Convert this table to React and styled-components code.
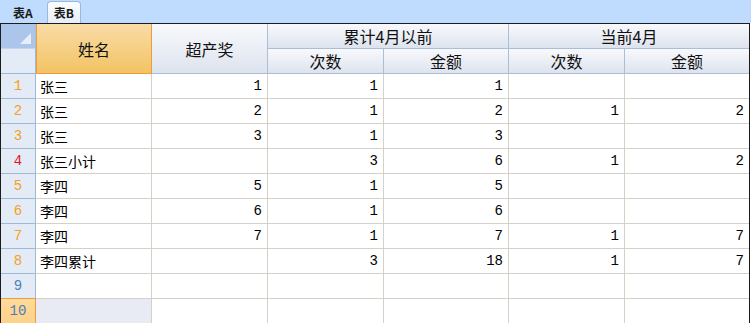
import React from "react";
import styled, { createGlobalStyle, css } from "styled-components";

const Global = createGlobalStyle`
  html, body {
    margin: 0;
    padding: 0;
    background: #ffffff;
    overflow: hidden;
  }
  body {
    font-family: "Noto Sans CJK SC", "Liberation Sans", sans-serif;
  }
`;

const Page = styled.div`
  width: 751px;
  height: 323px;
  display: flex;
  flex-direction: column;
  overflow: hidden;
`;

const TabStrip = styled.div`
  height: 23px;
  background: #bfdbfd;
  display: flex;
  align-items: flex-end;
  padding-left: 6px;
  gap: 7px;
  box-sizing: border-box;
`;

const Tab = styled.div`
  height: 22px;
  padding: 0 6px;
  display: flex;
  align-items: center;
  box-sizing: border-box;
  font-size: 12px;
  font-weight: bold;
  color: #1b1b1b;
  border: 1px solid transparent;
  border-bottom: none;
  border-radius: 4px 4px 0 0;
  ${(p) =>
    p.active &&
    css`
      background: linear-gradient(#fbfdff, #e6eef9);
      border-color: #9ab8df;
      padding: 0 6px;
    `}
`;

const Sheet = styled.div`
  display: grid;
  grid-template-columns: 35px 116px 116px 116px 125px 116px 124px;
  grid-auto-rows: 25px;
  border-top: 1px solid #1c1c1c;
  border-left: 1px solid #1c1c1c;
  border-right: 1px solid #1c1c1c;
  width: 750px;
  box-sizing: border-box;
  flex: 1;
  overflow: hidden;
`;

const Cell = styled.div`
  box-sizing: border-box;
  border-right: ${(p) => (p.last ? "none" : "1px solid #d5d1c9")};
  border-bottom: 1px solid #d5d1c9;
  font-size: 14px;
  color: #000;
  display: flex;
  align-items: center;
  justify-content: ${(p) => (p.num ? "flex-end" : "flex-start")};
  padding: ${(p) => (p.num ? "0 5px 1px 0" : "0 0 1px 4px")};
  font-family: ${(p) =>
    p.num
      ? `"Liberation Mono", "DejaVu Sans Mono", monospace`
      : `"Noto Sans CJK SC", sans-serif`};
  background: ${(p) => (p.picked ? "#e9ebf4" : "#ffffff")};
  white-space: nowrap;
`;

const Head = styled.div`
  box-sizing: border-box;
  grid-column: ${(p) => p.col || "auto"};
  grid-row: ${(p) => p.row || "auto"};
  background: linear-gradient(#f8f9fc, #dde3ee);
  border-right: ${(p) => (p.last ? "none" : "1px solid #a9bfd8")};
  border-bottom: 1px solid #a9bfd8;
  display: flex;
  align-items: center;
  justify-content: center;
  font-size: 16px;
  color: #111;
  white-space: nowrap;
`;

const NameHead = styled(Head)`
  background: linear-gradient(#f9dca6, #f2c364);
  border: 1px solid #f19a3a;
  border-top: none;
`;

const Corner = styled.div`
  position: relative;
  box-sizing: border-box;
  background: #abc6ea;
  border-right: 1px solid #a9bfd8;
  border-bottom: 1px solid #c6d6ea;
`;

const CornerMark = styled.div`
  position: absolute;
  right: 4px;
  bottom: 4px;
  width: 0;
  height: 0;
  border-left: 11px solid transparent;
  border-bottom: 11px solid #e7eef8;
`;

const RowHead = styled.div`
  box-sizing: border-box;
  background: ${(p) => (p.picked ? "linear-gradient(#ffdb9a, #fdd189)" : "#e3ebf6")};
  border-right: 1px solid ${(p) => (p.picked ? "#f19a3a" : "#9fb8d4")};
  border-bottom: 1px solid #9fb8d4;
  border-top: ${(p) => (p.picked ? "1px solid #f19a3a" : "none")};
  margin-top: ${(p) => (p.picked ? "-1px" : "0")};
  display: flex;
  align-items: center;
  justify-content: center;
  font-family: "Liberation Mono", "DejaVu Sans Mono", monospace;
  font-size: 14px;
  color: ${(p) => p.tone};
`;

const rows = [
  ["张三", 1, 1, 1, "", ""],
  ["张三", 2, 1, 2, 1, 2],
  ["张三", 3, 1, 3, "", ""],
  ["张三小计", "", 3, 6, 1, 2],
  ["李四", 5, 1, 5, "", ""],
  ["李四", 6, 1, 6, "", ""],
  ["李四", 7, 1, 7, 1, 7],
  ["李四累计", "", 3, 18, 1, 7],
  ["", "", "", "", "", ""],
  ["", "", "", "", "", ""],
];

function toneOf(i) {
  if (i == 3) return "#e8141c";
  if (i >= 8) return "#4a7ebd";
  return "#f5a020";
}

export default function App() {
  return (
    <Page>
      <Global />
      <TabStrip>
        <Tab>表A</Tab>
        <Tab active>表B</Tab>
      </TabStrip>
      <Sheet>
        <Corner>
          <CornerMark />
        </Corner>
        <NameHead col="2" row="1 / span 2">姓名</NameHead>
        <Head col="3" row="1 / span 2">超产奖</Head>
        <Head col="4 / span 2" row="1">累计4月以前</Head>
        <Head col="6 / span 2" row="1" last>当前4月</Head>
        <RowHead tone="#000" style={{ gridRow: 2, gridColumn: 1 }} />
        <Head>次数</Head>
        <Head>金额</Head>
        <Head>次数</Head>
        <Head last>金额</Head>

        {rows.map((r, i) => (
          <React.Fragment key={i}>
            <RowHead tone={toneOf(i)} picked={i == 9}>
              {i + 1}
            </RowHead>
            <Cell picked={i == 9}>{r[0]}</Cell>
            {r.slice(1).map((v, j) => (
              <Cell key={j} num last={j == 4}>
                {v}
              </Cell>
            ))}
          </React.Fragment>
        ))}
      </Sheet>
    </Page>
  );
}
